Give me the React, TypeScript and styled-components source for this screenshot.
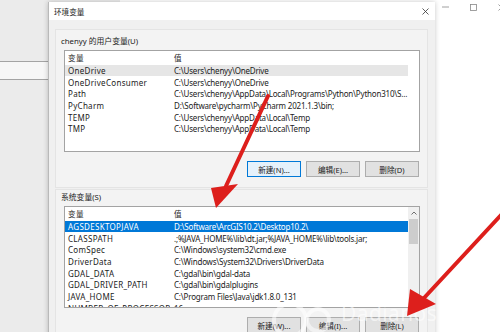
import React from "react";
import styled, { createGlobalStyle } from "styled-components";

const GlobalStyle = createGlobalStyle`
  html, body {
    margin: 0;
    padding: 0;
    background: #fff;
  }
`;

const Screen = styled.div`
  position: relative;
  width: 500px;
  height: 332px;
  overflow: hidden;
  display: flex;
  background: #fff;
  font-family: "Noto Sans", "Noto Sans CJK SC", sans-serif;
  font-size: 8px;
  color: #1b1b1b;
`;

/* window behind the dialog */
const BackPane = styled.div`
  width: 120px;
  flex-shrink: 0;
  background: #ebebeb;
  display: flex;
  flex-direction: column;
`;

const BackTop = styled.div`
  height: 61px;
`;

const BackBand = styled.div`
  height: 17px;
  background: #f7f7f7;
  border-top: 1px solid #a4a4a4;
  border-bottom: 1px solid #a4a4a4;
`;

const BackMain = styled.div`
  flex: 1;
  background: #fff;
  display: flex;
  flex-direction: column;
  align-items: flex-end;
`;

const WinControls = styled.div`
  display: flex;
  margin-right: -15px;
  height: 14px;
`;

const WinControl = styled.div`
  width: 28px;
  display: flex;
  align-items: center;
  justify-content: center;
`;

/* dialog */
const Dialog = styled.div`
  position: absolute;
  left: 48px;
  top: 2px;
  width: 386px;
  height: 345px;
  display: flex;
  flex-direction: column;
  border-left: 1px solid #b9b9b9;
  box-shadow: 0 0 5px rgba(0, 0, 0, 0.22);
  background: #f0f0f0;
`;

const TitleBar = styled.div`
  height: 18px;
  flex-shrink: 0;
  background: #fff;
  display: flex;
  align-items: center;
  padding-left: 5px;
  font-size: 7.6px;
`;

const Title = styled.div`
  flex: 1;
`;

const CloseBtn = styled.div`
  width: 20px;
  height: 18px;
  display: flex;
  align-items: center;
  justify-content: center;
`;

const Body = styled.div`
  flex: 1;
  padding: 9px 7px 0 6px;
  display: flex;
  flex-direction: column;
  gap: 1px;
`;

const Group = styled.div<{ $top: number }>`
  border: 1px solid #e4e4e4;
  background: #f3f3f3;
  padding: ${(p) => p.$top}px 7px 10px 8px;
  display: flex;
  flex-direction: column;
`;

const GroupLabel = styled.div`
  height: 12px;
  line-height: 12px;
  margin-left: -3px;
  font-size: 7.8px;
`;

const List = styled.div`
  margin-top: 3px;
  height: 100px;
  border: 1px solid #a3a3a3;
  background: #fff;
  display: flex;
  overflow: hidden;
`;

const ListContent = styled.div`
  flex: 1;
  display: flex;
  flex-direction: column;
  overflow: hidden;
`;

const HeaderRow = styled.div`
  height: 13.5px;
  flex-shrink: 0;
  display: flex;
  align-items: center;
  font-size: 7.6px;
  color: #2a2a2a;
`;

const Row = styled.div<{ $sel?: "active" | "inactive" }>`
  height: 11.7px;
  flex-shrink: 0;
  width: 343px;
  display: flex;
  align-items: center;
  white-space: nowrap;
  background: ${(p) =>
    p.$sel === "active" ? "#0078d7" : p.$sel === "inactive" ? "#e6e6e6" : "transparent"};
  color: ${(p) => (p.$sel === "active" ? "#fff" : "#1b1b1b")};
`;

const NameCell = styled.div`
  width: 105px;
  flex-shrink: 0;
  padding-left: 3px;
  box-sizing: border-box;
  overflow: hidden;
  letter-spacing: 0.3px;
`;

const ValueCell = styled.div`
  flex: 1;
  padding-left: 4px;
  overflow: hidden;
  letter-spacing: -0.2px;
`;

const Scrollbar = styled.div`
  width: 11px;
  flex-shrink: 0;
  background: #f0f0f0;
  display: flex;
  flex-direction: column;
  align-items: center;
`;

const ScrollArrow = styled.div`
  height: 11px;
  display: flex;
  align-items: center;
  justify-content: center;
`;

const ScrollThumb = styled.div`
  width: 9px;
  height: 25px;
  margin-top: 1px;
  background: #cdcdcd;
`;

const ButtonRow = styled.div`
  margin-top: 9px;
  margin-right: 1px;
  display: flex;
  justify-content: flex-end;
  gap: 5px;
`;

const Button = styled.div<{ $focus?: boolean }>`
  width: 54px;
  height: 16px;
  box-sizing: border-box;
  display: flex;
  align-items: center;
  justify-content: center;
  font-size: 7.6px;
  background: ${(p) => (p.$focus ? "#e5f1fb" : "#e1e1e1")};
  border: 1px solid ${(p) => (p.$focus ? "#0078d7" : "#adadad")};
`;

/* overlays: red arrows and watermark */
const Overlay = styled.svg`
  position: absolute;
  left: 0;
  top: 0;
  pointer-events: none;
`;

const Watermark = styled.div`
  position: absolute;
  left: 341px;
  top: 299px;
  font-family: "Open Sans", sans-serif;
  font-size: 21px;
  letter-spacing: 0.5px;
  color: rgba(255, 255, 255, 0.6);
  pointer-events: none;
`;

type Pair = [string, string];

const userVars: Pair[] = [
  ["OneDrive", "C:\\Users\\chenyy\\OneDrive"],
  ["OneDriveConsumer", "C:\\Users\\chenyy\\OneDrive"],
  ["Path", "C:\\Users\\chenyy\\AppData\\Local\\Programs\\Python\\Python310\\S..."],
  ["PyCharm", "D:\\Software\\pycharm\\PyCharm 2021.1.3\\bin;"],
  ["TEMP", "C:\\Users\\chenyy\\AppData\\Local\\Temp"],
  ["TMP", "C:\\Users\\chenyy\\AppData\\Local\\Temp"],
];

const sysVars: Pair[] = [
  ["AGSDESKTOPJAVA", "D:\\Software\\ArcGIS10.2\\Desktop10.2\\"],
  ["CLASSPATH", ".;%JAVA_HOME%\\lib\\dt.jar;%JAVA_HOME%\\lib\\tools.jar;"],
  ["ComSpec", "C:\\Windows\\system32\\cmd.exe"],
  ["DriverData", "C:\\Windows\\System32\\Drivers\\DriverData"],
  ["GDAL_DATA", "C:\\gdal\\bin\\gdal-data"],
  ["GDAL_DRIVER_PATH", "C:\\gdal\\bin\\gdalplugins"],
  ["JAVA_HOME", "C:\\Program Files\\Java\\jdk1.8.0_131"],
  ["NUMBER_OF_PROCESSORS", "16"],
];

const VarList: React.FC<{ rows: Pair[]; selected: "active" | "inactive"; scroll?: boolean }> = ({
  rows,
  selected,
  scroll,
}) => (
  <List>
    <ListContent>
      <HeaderRow>
        <NameCell>变量</NameCell>
        <ValueCell>值</ValueCell>
      </HeaderRow>
      {rows.map(([name, value], i) => (
        <Row key={name} $sel={i === 0 ? selected : undefined}>
          <NameCell>{name}</NameCell>
          <ValueCell>{value}</ValueCell>
        </Row>
      ))}
    </ListContent>
    {scroll && (
      <Scrollbar>
        <ScrollArrow>
          <svg width="6" height="4" viewBox="0 0 6 4">
            <path d="M0.5 3.5 L3 1 L5.5 3.5" fill="none" stroke="#606060" strokeWidth="0.9" />
          </svg>
        </ScrollArrow>
        <ScrollThumb />
      </Scrollbar>
    )}
  </List>
);

export default function App() {
  return (
    <>
      <GlobalStyle />
      <Screen>
        <BackPane>
          <BackTop />
          <BackBand />
        </BackPane>
        <BackMain>
          <WinControls>
            <WinControl>
              <svg width="7" height="2" viewBox="0 0 7 2">
                <line x1="0" y1="1" x2="7" y2="1" stroke="#888" strokeWidth="0.8" />
              </svg>
            </WinControl>
            <WinControl>
              <svg width="7" height="7" viewBox="0 0 7 7">
                <rect x="0.5" y="0.5" width="6" height="6" fill="none" stroke="#888" strokeWidth="0.8" />
              </svg>
            </WinControl>
            <WinControl>
              <svg width="7" height="7" viewBox="0 0 7 7">
                <path d="M0.5 0.5 L6.5 6.5 M6.5 0.5 L0.5 6.5" stroke="#888" strokeWidth="0.8" />
              </svg>
            </WinControl>
          </WinControls>
        </BackMain>

        <Dialog>
          <TitleBar>
            <Title>环境变量</Title>
            <CloseBtn>
              <svg width="7" height="7" viewBox="0 0 7 7">
                <path d="M0.5 0.5 L6.5 6.5 M6.5 0.5 L0.5 6.5" stroke="#333" strokeWidth="0.8" />
              </svg>
            </CloseBtn>
          </TitleBar>
          <Body>
            <Group $top={5}>
              <GroupLabel>chenyy 的用户变量(U)</GroupLabel>
              <VarList rows={userVars} selected="inactive" />
              <ButtonRow>
                <Button $focus>新建(N)...</Button>
                <Button>编辑(E)...</Button>
                <Button>删除(D)</Button>
              </ButtonRow>
            </Group>
            <Group $top={1}>
              <GroupLabel>系统变量(S)</GroupLabel>
              <VarList rows={sysVars} selected="active" scroll />
              <ButtonRow>
                <Button>新建(W)...</Button>
                <Button>编辑(I)...</Button>
                <Button>删除(L)</Button>
              </ButtonRow>
            </Group>
          </Body>
        </Dialog>

        <Watermark>Dadianos</Watermark>

        <Overlay width="500" height="332" viewBox="0 0 500 332">
          <g fill="none" stroke="rgba(255,255,255,0.55)" strokeWidth="4">
            <circle cx="290" cy="320" r="16" />
            <circle cx="318" cy="320" r="11" />
          </g>
          <g fill="#dd1f1c">
            <line x1="268" y1="96" x2="226" y2="186" stroke="#dd1f1c" strokeWidth="4" strokeLinecap="round" />
            <polygon points="211,188 238,184 216,208" />
            <line x1="502" y1="214" x2="424" y2="298" stroke="#dd1f1c" strokeWidth="4" strokeLinecap="round" />
            <polygon points="410,289 436,304 407,316" />
          </g>
        </Overlay>
      </Screen>
    </>
  );
}
